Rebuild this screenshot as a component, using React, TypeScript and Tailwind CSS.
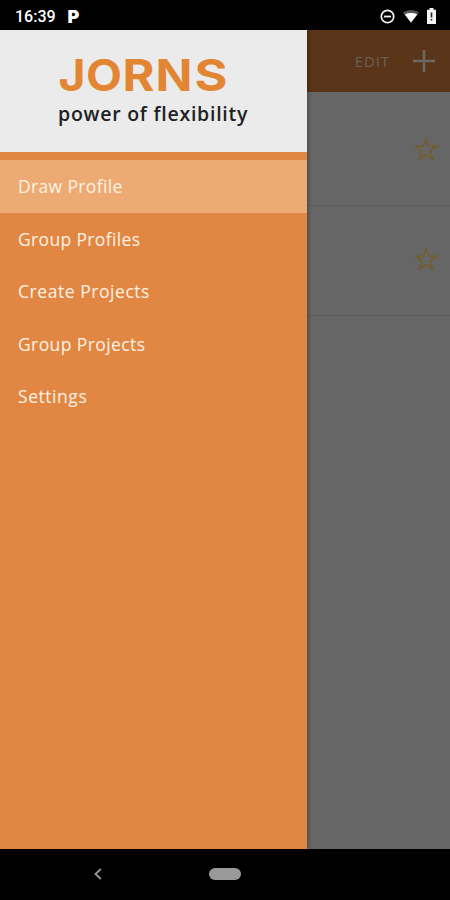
import { memo } from "react";

type MenuItem = { name: string; spacing: string };
type LogoLetter = { char: string; x: number; width: number };

const menuItems: MenuItem[] = [
  { name: "Draw Profile", spacing: "tracking-[0.35px]" },
  { name: "Group Profiles", spacing: "tracking-[0.35px]" },
  { name: "Create Projects", spacing: "tracking-[0.55px]" },
  { name: "Group Projects", spacing: "tracking-[0.4px]" },
  { name: "Settings", spacing: "tracking-[0.55px]" },
];

const logoLetters: LogoLetter[] = [
  { char: "J", x: 0.5, width: 27 },
  { char: "O", x: 28, width: 36 },
  { char: "R", x: 64.5, width: 32 },
  { char: "N", x: 97.5, width: 37 },
  { char: "S", x: 136.5, width: 33 },
];

const StatusBar = () => {
  return (
    <div className="flex h-[30px] shrink-0 items-center justify-between bg-black pl-[15px] pr-[14px] pt-[2px] text-white">
      <div className="flex items-center gap-[12px] pt-px">
        <span className="font-['Roboto',sans-serif] text-[16px] font-medium leading-none">16:39</span>
        <span className="font-['Inter',sans-serif] text-[18px] font-black leading-none">P</span>
      </div>
      <div className="flex items-center">
        <svg width="15" height="15" viewBox="0 0 15 15" fill="none" stroke="#f2f2f2">
          <circle cx="7.5" cy="7.5" r="6.2" strokeWidth="1.7" />
          <path d="M4 7.5h7" strokeWidth="1.8" />
        </svg>
        <svg className="ml-[8px]" width="16" height="13" viewBox="0 0 16 13">
          <path d="M0 2.6C4.5-.8 11.5-.8 16 2.6L8 13z" fill="#555" />
          <path d="M1.8 4.4C5.5 2.6 10.5 2.6 14.2 4.4L8 12.6z" fill="#fff" />
        </svg>
        <svg className="ml-[8px]" width="9" height="16" viewBox="0 0 9 16">
          <path d="M2.5 0h4v1.7H9V16H0V1.7h2.5z" fill="#f5f5f5" />
          <path d="M4.5 4.5v5M4.5 11v1.5" stroke="#222" strokeWidth="1.6" />
        </svg>
      </div>
    </div>
  );
};

const Logo = () => {
  return (
    <svg className="block overflow-visible" width="200" height="41" viewBox="0 0 200 41">
      <g fill="#e28634" fontFamily="Inter, sans-serif" fontWeight="700" fontSize="44">
        {logoLetters.map((l) => (
          <text key={l.char} x={l.x} y="36" textLength={l.width} lengthAdjust="spacingAndGlyphs">
            {l.char}
          </text>
        ))}
      </g>
    </svg>
  );
};

const Drawer = () => {
  return (
    <div className="z-10 flex w-[307px] shrink-0 flex-col bg-[#e28743] shadow-[1px_0_4px_rgba(0,0,0,0.3)]">
      <div className="h-[122px] bg-[#ebebeb] pl-[58px] pt-[25px]">
        <Logo />
        <p className="mt-[5px] whitespace-nowrap font-['Open_Sans',sans-serif] text-[19.5px] font-semibold leading-[26px] tracking-[0.75px] text-[#202124]">
          power of flexibility
        </p>
      </div>
      <nav className="pt-[8px]">
        {menuItems.map((item, i) => (
          <div key={item.name} className={i === 0 ? "h-[53px] bg-[#edab73]" : "h-[52.4px]"}>
            <p
              className={`whitespace-nowrap pl-[18px] font-['Open_Sans',sans-serif] text-[17.5px] font-medium leading-[53px] text-[#fff2e3] ${item.spacing}`}
            >
              {item.name}
            </p>
          </div>
        ))}
      </nav>
    </div>
  );
};

const ProfileRow = () => {
  return (
    <div className="flex h-[110.5px] items-center justify-end border-b border-[#5e5e5e] pb-[2px] pr-[11px]">
      <svg width="26" height="26" viewBox="0 0 26 26" fill="none" stroke="#765c22" strokeWidth="1.3">
        <path d="M13 2.5l2.7 7.6h8.2l-6.6 5 2.5 8.300-6.800-4.800-6.800 4.800 2.500-8.300-6.600-5h8.200z" />
      </svg>
    </div>
  );
};

const ProfileList = () => {
  return (
    <div className="flex grow flex-col bg-[#666666]">
      <div className="flex h-[62px] items-center justify-end bg-[#5a3519] pr-[15px]">
        <span className="font-['Open_Sans',sans-serif] text-[15px] font-medium leading-none tracking-[0.9px] text-[#6b6258]">EDIT</span>
        <svg className="ml-[23px]" width="22" height="22" viewBox="0 0 22 22">
          <path d="M11 0v22M0 11h22" stroke="#6b6864" strokeWidth="2.6" />
        </svg>
      </div>
      <div className="pt-[3px]">
        <ProfileRow />
        <ProfileRow />
      </div>
    </div>
  );
};

const NavigationBar = () => {
  return (
    <div className="grid h-[51px] shrink-0 grid-cols-[94px_16px_1fr] items-center bg-black pb-[2px]">
      <svg className="col-start-2" width="8" height="12" viewBox="0 0 8 12" fill="none">
        <path d="M6.8 1L1.5 6l5.3 5" stroke="#999" strokeWidth="1.8" />
      </svg>
      <div className="ml-[99px] h-[12px] w-[32px] rounded-full bg-[#999999]" />
    </div>
  );
};

const App = () => {
  return (
    <div className="flex h-[900px] w-[450px] flex-col overflow-hidden bg-black">
      <StatusBar />
      <div className="flex min-h-0 grow">
        <Drawer />
        <ProfileList />
      </div>
      <NavigationBar />
    </div>
  );
};

export default memo(App);
